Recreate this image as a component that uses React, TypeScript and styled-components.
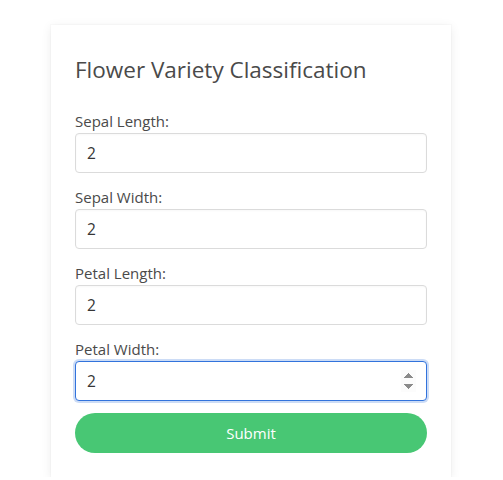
import React from "react";
import styled, { createGlobalStyle, css } from "styled-components";

const Global = createGlobalStyle`
  * { box-sizing: border-box; }
  body {
    margin: 0;
    background: #ffffff;
    font-family: "Open Sans", "Noto Sans", sans-serif;
    color: #4a4a4a;
  }
`;

const Page = styled.div`
  display: flex;
  justify-content: center;
  padding: 25px 1px 0 0;
`;

const Card = styled.div`
  width: 400px;
  background: #fff;
  padding: 24px;
  box-shadow: 0 2px 10px rgba(10, 10, 10, 0.08), 0 0 0 1px rgba(10, 10, 10, 0.015);
`;

const Title = styled.h2`
  margin: 6px 0 26px;
  font-size: 22.5px;
  font-weight: 400;
  line-height: 29px;
  color: #4a4a4a;
`;

const Field = styled.div<{ $last?: boolean }>`
  display: flex;
  flex-direction: column;
  margin-bottom: ${(p) => (p.$last ? "0" : "13px")};
`;

const Label = styled.label`
  font-size: 15px;
  line-height: 23px;
  color: #4a4a4a;
`;

const Input = styled.input<{ $active?: boolean }>`
  height: 40px;
  width: 100%;
  border: 1px solid #dbdbdb;
  border-radius: 4px;
  padding: 0 10px 0 11px;
  font-family: inherit;
  font-size: 15.5px;
  color: #363636;
  background: #fff;
  outline: none;
  box-shadow: inset 0 1px 2px rgba(10, 10, 10, 0.03);
  &::-webkit-inner-spin-button,
  &::-webkit-outer-spin-button {
    opacity: 0;
  }
  ${(p) =>
    p.$active &&
    css`
      border-color: #3273dc;
      box-shadow: 0 0 0 2px rgba(50, 115, 220, 0.25);
      &::-webkit-inner-spin-button {
        opacity: 1;
        background-color: #efefef;
      }
    `}
`;

const Submit = styled.button`
  display: block;
  width: 100%;
  height: 40px;
  margin-top: 12px;
  border: none;
  border-radius: 20px;
  background: #48c774;
  color: #fff;
  font-family: inherit;
  font-size: 15px;
  cursor: pointer;
`;

const fields = ["Sepal Length:", "Sepal Width:", "Petal Length:", "Petal Width:"];

export default function App() {
  return (
    <>
      <Global />
      <Page>
        <Card>
          <Title>Flower Variety Classification</Title>
          <form onSubmit={(e) => e.preventDefault()}>
            {fields.map((f, i) => (
              <Field key={f} $last={i === fields.length - 1}>
                <Label>{f}</Label>
                <Input type="number" defaultValue={2} $active={i === fields.length - 1} />
              </Field>
            ))}
            <Submit type="submit">Submit</Submit>
          </form>
        </Card>
      </Page>
    </>
  );
}
